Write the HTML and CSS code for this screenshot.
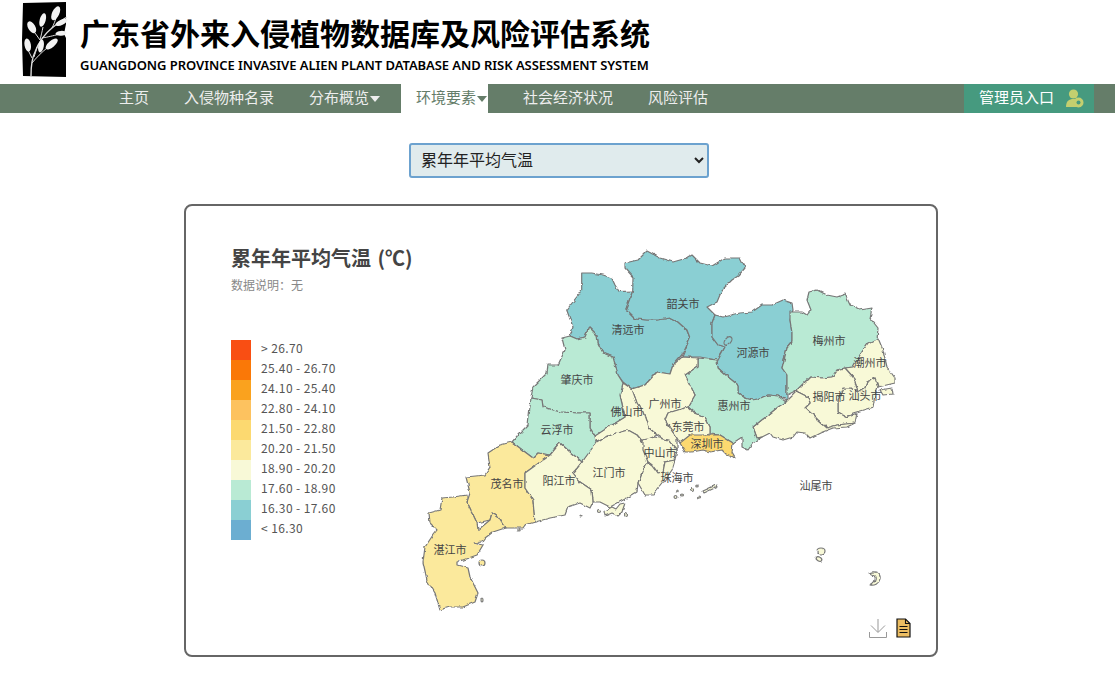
FILE: index.html

```html
<!DOCTYPE html>
<html lang="zh-CN">
<head>
<meta charset="utf-8"/>
<title>广东省外来入侵植物数据库及风险评估系统</title>
<link rel="stylesheet" href="styles.css">
</head>
<body>
<div class="header">
  <svg class="logo" width="46" height="75" viewBox="0 0 46 75">
    <path d="M1 1 L44 0 L44 22 L42 32 L44 36 L44 75 L1 74 L0 38 Z" fill="#000"/>
    <g stroke="#ddd" stroke-width="1" fill="none">
      <path d="M9 74 C9 62 10 56 13 50 C16 42 20 34 30 26 C35 22 40 18 45 15" stroke-width="1.4"/>
      <path d="M10 61 C14 56 20 50 25 46"/>
      <path d="M13 31 L18 38"/>
      <path d="M21 25 C20 30 19 34 18 38"/>
      <path d="M20 36 C26 35 30 34 38 32"/>
      <path d="M15 45 C14 49 13 52 12 55"/>
      <path d="M10 56 L6 48"/>
      <path d="M30 26 C32 22 33 19 34 16"/>
    </g>
    <g fill="#f2f2f2">
      <ellipse cx="33.7" cy="11.3" rx="3.6" ry="7.5" transform="rotate(25 33.7 11.3)"/>
      <ellipse cx="20.7" cy="18" rx="3" ry="7" transform="rotate(15 20.7 18)"/>
      <ellipse cx="9.7" cy="25.3" rx="3.6" ry="6.5" transform="rotate(-30 9.7 25.3)"/>
      <ellipse cx="39.5" cy="20.3" rx="2.6" ry="6.5" transform="rotate(65 39.5 20.3)"/>
      <ellipse cx="39" cy="31.3" rx="2.4" ry="5.5" transform="rotate(85 39 31.3)"/>
      <ellipse cx="5.7" cy="43" rx="3.2" ry="6.5" transform="rotate(-10 5.7 43)"/>
      <ellipse cx="19" cy="44" rx="2.8" ry="6.5" transform="rotate(10 19 44)"/>
      <ellipse cx="29.7" cy="42" rx="3.2" ry="7.5" transform="rotate(50 29.7 42)"/>
    </g>
  </svg>
  <div class="site-name">
    <h1>广东省外来入侵植物数据库及风险评估系统</h1>
    <p>GUANGDONG PROVINCE INVASIVE ALIEN PLANT DATABASE AND RISK ASSESSMENT SYSTEM</p>
  </div>
</div>

<div class="nav">
  <ul>
    <li>主页</li>
    <li>入侵物种名录</li>
    <li class="has-menu">分布概览<i class="caret"></i></li>
    <li class="has-menu active">环境要素<i class="caret"></i></li>
    <li>社会经济状况</li>
    <li>风险评估</li>
  </ul>
  <div class="admin">
    <span>管理员入口</span>
    <svg width="18" height="19" viewBox="0 0 18 19">
      <circle cx="7.5" cy="5" r="4.6" fill="#c4cf6f"/>
      <path d="M0 18 C0 12 3 10 7.5 10 C12 10 15 12 15 18 Z" fill="#c4cf6f"/>
      <circle cx="12.5" cy="13.5" r="5" fill="#c4cf6f"/>
      <circle cx="12.5" cy="13.5" r="2" fill="#469a7f"/>
    </svg>
  </div>
</div>

<div class="picker">
  <select>
    <option>累年年平均气温</option>
  </select>
</div>

<div class="card">
  <svg class="map" viewBox="186 206 750 449">
    <defs>
      <filter id="rough" filterUnits="userSpaceOnUse" x="186" y="206" width="750" height="449" color-interpolation-filters="sRGB">
        <feTurbulence type="fractalNoise" baseFrequency="0.16" numOctaves="2" seed="4"/>
        <feDisplacementMap in="SourceGraphic" scale="3.4" xChannelSelector="R" yChannelSelector="G"/>
      </filter>
    </defs>
    <g class="regions" filter="url(#rough)">
      <!-- 粤北 -->
      <polygon class="c2" points="581.7,273 591.7,273 603,275 611.7,278 615,285 619.3,291.7 632.7,291 626,309 636,319 646.7,320 658,320 670,318 678,322 686.7,330 690,338 681.7,355 673,365 670,374 656.7,372 645,385 631.7,389 623,382 618,375 613,357 603,353 598,343 597,335 589,327 585,337 577,339 570,336 573,327 566.7,310 576.7,297 581.7,290"/>
      <polygon class="c2" points="626,309 632.7,291 633,277 625,268 625,263 638,260 647,251 660,258 673,262 687,258 692,255 700,263 712,266 725,258 740,258 745,268 738,276 732,280 722,290 717,302 707,307 715,315 712,323 712,337 718,345 725,347 717,360 700,357 682,357 690,338 687,330 678,322 670,318 658,320 647,320 636,319"/>
      <polygon class="c2" points="715,315 723,317 740,313 752,312 762,305 772,305 783,300 792,303 793,310 790,320 792,333 792,342 787,348 782,368 787,375 787,400 778,396 768,395 758,399 752,400 745,398 738,393 738,385 728,377 718,368 717,362 725,347 718,345 712,337 712,323"/>
      <polygon class="c3" points="790,312 802,312 807,315 811,310 807,300 809,292 817,290 827,295 837,297 845,294 850,305 860,310 872,308 870,318 878,328 877,340 868,343 860,355 853,367 845,368 837,370 832,377 822,378 810,377 797,390 787,395 787,375 782,368 787,348 792,342 792,333 790,320"/>
      <!-- 粤东 -->
      <polygon class="c4" points="878,338 883,350 887,367 895,378 895,383 878,387 875,378 867,382 865,388 858,392 855,382 853,377 845,368 853,367 860,355 868,343"/>
      <polygon class="c4" points="858,392 865,388 867,382 875,378 878,387 875,395 873,407 863,410 853,413 847,417 838,412 838,400 843,388 852,388"/>
      <polygon class="c4" points="797,390 810,377 822,378 832,377 837,370 845,368 853,377 855,382 858,392 852,388 843,388 838,400 838,412 847,417 857,413 855,423 837,425 827,428 818,420 813,415 805,408 810,403 808,397 800,393"/>
      <polygon class="c4" points="787,400 797,390 800,393 808,397 810,403 805,408 813,415 818,420 827,428 837,425 855,423 847,427 833,428 820,433 810,438 805,433 797,432 793,437 783,440 773,437 770,433 762,437 757,438 753,427 768,415 778,407"/>
      <polygon class="c3" points="698,358 717,360 718,368 728,377 738,385 738,393 745,398 752,400 758,399 768,395 778,396 786,402 778,407 768,415 753,427 757,438 762,437 753,443 748,450 742,447 742,437 733,443 720,435 710,434 710,427 705,417 695,413 688,407 695,395 685,375 698,366"/>
      <!-- 珠三角 -->
      <polygon class="c4" points="631.7,389 645,385 657,372 670,374 673,365 682,357 698,358 698,366 685,375 695,395 688,407 668,413 665,420 670,428 677,438 677,452 672,445 660,437 657,435 648,427 643,412 637,403"/>
      <polygon class="c4" points="668,413 688,407 695,413 705,417 710,427 710,434 700,436 690,436 680,443 677,438 670,428 665,420"/>
      <polygon class="c6" points="690,435 707,435 720,435 733,443 732,453 735,458 727,455 722,450 710,452 703,450 692,452 685,452 680,443"/>
      <polygon class="c4" points="623,383 632,389 637,403 643,412 648,427 657,435 647,440 643,442 637,435 628,430 617,433 603,438 595,442 595,435 625,417 620,395"/>
      <polygon class="c4" points="582,462 595,443 603,438 617,433 628,430 637,435 643,442 647,450 648,462 643,470 638,483 637,492 627,498 610,507 600,502 593,502 592,490 580,482 573,473"/>
      <polygon class="c4" points="643,440 655,437 668,440 677,450 675,460 665,462 663,472 658,473 652,465 648,462 643,450"/>
      <polygon class="c4" points="665,462 675,460 672,470 665,480 653,495 645,495 638,483 643,470 648,462 652,465 658,473 663,472"/>
      <!-- 粤西 -->
      <polygon class="c3" points="562,338 570,336 577,339 585,337 589,327 597,335 598,343 603,353 613,357 618,375 623,383 620,395 625,417 607,428 595,436 590,428 590,413 578,413 560,412 543,407 542,400 531,398 533,387 547,373 548,365 558,365 565,350"/>
      <polygon class="c3" points="531,398 542,400 543,407 560,412 578,413 590,413 590,428 595,436 596,443 582,462 570,452 560,443 550,455 538,453 533,458 525,452 512,442 518,435 528,425"/>
      <polygon class="c5" points="512,442 525,452 533,458 538,453 550,455 525,473 525,488 533,500 535,522 525,525 523,528 505,528 498,517 492,513 490,520 477,523 467,502 470,493 466,477 485,475 490,467 488,453 500,445"/>
      <polygon class="c4" points="550,455 560,443 570,452 582,462 573,473 580,482 592,490 593,502 590,508 580,503 568,507 565,515 550,518 535,522 533,500 525,488 525,473"/>
      <polygon class="c5" points="467,502 477,523 478,530 490,520 492,513 498,517 505,528 493,532 485,538 482,542 473,543 483,545 477,555 457,562 457,565 468,568 470,577 478,593 475,602 463,607 450,607 440,610 435,593 427,580 423,562 425,547 433,535 437,530 430,523 429,513 440,510 442,498 453,497 467,495"/>
      <ellipse class="c5" cx="482" cy="563" rx="3" ry="3"/>
      <!-- 岛屿 -->
      <ellipse class="c2" cx="728" cy="341" rx="3" ry="5" transform="rotate(40 728 341)"/>
      <polygon class="c4" points="880,390 892,388 893,394 883,395"/>
      <polygon class="c4" points="604,511 612,507 616,509 620,504 625,503 622,512 618,516 612,513 605,516"/>
      <polygon class="c4" points="703,491 716,485 717,487 704,493"/>
      <ellipse class="c4" cx="821" cy="551" rx="4" ry="3"/>
      <ellipse class="c4" cx="819" cy="559" rx="3" ry="2" transform="rotate(30 819 559)"/>
      <path class="c4" d="M869 573 C876 570 881 574 880 579 C879 584 874 586 870 585 C874 583 876 580 875 577 C874 575 872 574 869 573 Z"/>
      <ellipse class="c4" cx="599" cy="511" rx="1.5" ry="1.5"/>
      <ellipse class="c4" cx="626" cy="515" rx="1.5" ry="1.5"/>
      <ellipse class="c4" cx="682" cy="495" rx="1.5" ry="1"/>
      <ellipse class="c4" cx="676" cy="497" rx="2" ry="1.5"/>
      <ellipse class="c4" cx="677" cy="491" rx="1.2" ry="1"/>
      <ellipse class="c4" cx="692" cy="490" rx="1.5" ry="1.5"/>
      <ellipse class="c4" cx="697" cy="486" rx="1.2" ry="1"/>
      <ellipse class="c4" cx="699" cy="497" rx="1.5" ry="1"/>
      <ellipse class="c4" cx="519" cy="530" rx="1.2" ry="1"/>
      <ellipse class="c4" cx="581" cy="516" rx="1" ry="1"/>
      <ellipse class="c4" cx="482" cy="600" rx="1" ry="2"/>
    </g>
    <g class="labels" transform="translate(0 1.5)">
      <text x="683" y="304">韶关市</text>
      <text x="628" y="330">清远市</text>
      <text x="753" y="353">河源市</text>
      <text x="829" y="341">梅州市</text>
      <text x="870" y="363">潮州市</text>
      <text x="577" y="380">肇庆市</text>
      <text x="627" y="412">佛山市</text>
      <text x="665" y="404">广州市</text>
      <text x="734" y="406">惠州市</text>
      <text x="688" y="427">东莞市</text>
      <text x="707" y="444">深圳市</text>
      <text x="829" y="397">揭阳市</text>
      <text x="865" y="396">汕头市</text>
      <text x="557" y="430">云浮市</text>
      <text x="507" y="484">茂名市</text>
      <text x="559" y="481">阳江市</text>
      <text x="609" y="473">江门市</text>
      <text x="660" y="453">中山市</text>
      <text x="677" y="478">珠海市</text>
      <text x="816" y="486">汕尾市</text>
      <text x="450" y="550">湛江市</text>
    </g>
  </svg>

  <h3 class="chart-title">累年年平均气温 (℃)</h3>
  <p class="chart-note">数据说明&#xFF1A;无</p>
  <ul class="legend">
    <li><i class="sw1"></i>&gt; 26.70</li>
    <li><i class="sw2"></i>25.40 - 26.70</li>
    <li><i class="sw3"></i>24.10 - 25.40</li>
    <li><i class="sw4"></i>22.80 - 24.10</li>
    <li><i class="sw5"></i>21.50 - 22.80</li>
    <li><i class="sw6"></i>20.20 - 21.50</li>
    <li><i class="sw7"></i>18.90 - 20.20</li>
    <li><i class="sw8"></i>17.60 - 18.90</li>
    <li><i class="sw9"></i>16.30 - 17.60</li>
    <li><i class="sw10"></i>&lt; 16.30</li>
  </ul>

  <div class="tools">
    <svg width="18" height="20" viewBox="0 0 18 20" fill="none" stroke="#999" stroke-width="1">
      <path d="M9 1 V14 M2 7.5 L9 14.5 L16 7.5 M.5 14 V19.5 H17.5 V14"/>
    </svg>
    <svg width="15" height="20" viewBox="0 0 15 20">
      <path d="M1 1 H9.5 L14 5.5 V19 H1 Z" fill="#ecbd62" stroke="#111" stroke-width="1.2"/>
      <path d="M9.5 1 V5.5 H14 M3.5 8.5 H11.5 M3.5 11.5 H11.5 M3.5 14.5 H11.5" fill="none" stroke="#111" stroke-width="1.1"/>
    </svg>
  </div>
</div>
</body>
</html>
```

FILE: styles.css

```css
body {
  margin: 0;
  font-family: "Noto Sans CJK SC", "Noto Sans", sans-serif;
  background-color: #fff;
  color: #333;
}
.header {
  display: flex;
  height: 84px;
  padding-left: 22px;
  box-sizing: border-box;
  padding-top: 2px;
}
.logo {
  display: block;
  flex: none;
}
.site-name {
  margin-left: 12px;
}
.site-name h1 {
  margin: 8px 0 0;
  font-size: 30px;
  line-height: 44px;
  font-weight: 700;
  color: #000;
  white-space: nowrap;
}
.site-name p {
  margin: 3px 0 0;
  font-family: "Noto Sans", sans-serif;
  font-size: 13px;
  line-height: 16px;
  font-weight: 600;
  letter-spacing: -0.06px;
  color: #000;
  white-space: nowrap;
}
.nav {
  display: flex;
  justify-content: space-between;
  height: 29px;
  background-color: #657d69;
  color: #eee;
  font-size: 15px;
  line-height: 26px;
}
.nav ul {
  display: flex;
  margin: 0;
  padding: 0 0 0 84px;
  list-style: none;
}
.nav li {
  margin-left: 20px;
  padding-left: 15px;
  white-space: nowrap;
}
.nav li.active {
  margin-left: 21px;
  padding-right: 1px;
  background-color: #fff;
  color: #657d69;
}
.caret {
  display: inline-block;
  margin-left: 1px;
  border-top: 6px solid #eee;
  border-left: 5px solid transparent;
  border-right: 5px solid transparent;
  vertical-align: 1px;
}
.active .caret {
  border-top-color: #657d69;
}
.admin {
  display: flex;
  align-items: flex-start;
  gap: 12px;
  width: 130px;
  margin-right: 21px;
  padding-left: 15px;
  box-sizing: border-box;
  background-color: #469a7f;
  color: #fff;
}
.admin svg {
  margin-top: 5px;
}
.picker {
  display: flex;
  justify-content: center;
  padding: 30px 0 26px 3px;
}
.picker select {
  width: 300px;
  height: 35px;
  padding: 0 6px 3px;
  border: 2px solid #6ca2cf;
  border-radius: 3px;
  background-color: #e0ebed;
  color: #222;
  font-family: inherit;
  font-size: 16px;
}
.card {
  position: relative;
  box-sizing: border-box;
  width: 754px;
  height: 453px;
  margin-left: 184px;
  padding: 37px 45px 0;
  border: 2px solid #666;
  border-radius: 8px;
}
.map {
  position: absolute;
  left: 0;
  top: 0;
  width: 750px;
  height: 449px;
}
.regions polygon, .regions ellipse, .regions path {
  stroke: #777;
  stroke-width: 1.2;
  stroke-linejoin: round;
}
.c2 { fill: #8acfd3; }
.c3 { fill: #b9ead4; }
.c4 { fill: #f8f9d7; }
.c5 { fill: #fbe99c; }
.c6 { fill: #fcd970; }
.labels text {
  font-size: 11px;
  fill: #444;
  text-anchor: middle;
  dominant-baseline: middle;
}
.chart-title {
  position: relative;
  margin: 0;
  font-size: 20px;
  line-height: 30px;
  font-weight: 700;
  word-spacing: 2px;
  color: #444;
}
.chart-note {
  position: relative;
  margin: 2px 0 0;
  font-size: 12px;
  line-height: 20px;
  color: #888;
}
.legend {
  position: relative;
  margin: 45px 0 0;
  padding: 0;
  list-style: none;
  font-size: 12px;
  line-height: 15px;
  letter-spacing: 0.4px;
  color: #555;
}
.legend li {
  display: flex;
  height: 20px;
}
.legend i {
  width: 20px;
  height: 20px;
  margin-right: 10px;
}
.sw1 { background-color: #f94e13; }
.sw2 { background-color: #fa7807; }
.sw3 { background-color: #faa21e; }
.sw4 { background-color: #fdc25f; }
.sw5 { background-color: #fcd970; }
.sw6 { background-color: #fbe99c; }
.sw7 { background-color: #f8f9d7; }
.sw8 { background-color: #b9ead4; }
.sw9 { background-color: #8acfd3; }
.sw10 { background-color: #6caed1; }
.tools {
  position: absolute;
  right: 25px;
  bottom: 17px;
  display: flex;
  gap: 9px;
}
```
